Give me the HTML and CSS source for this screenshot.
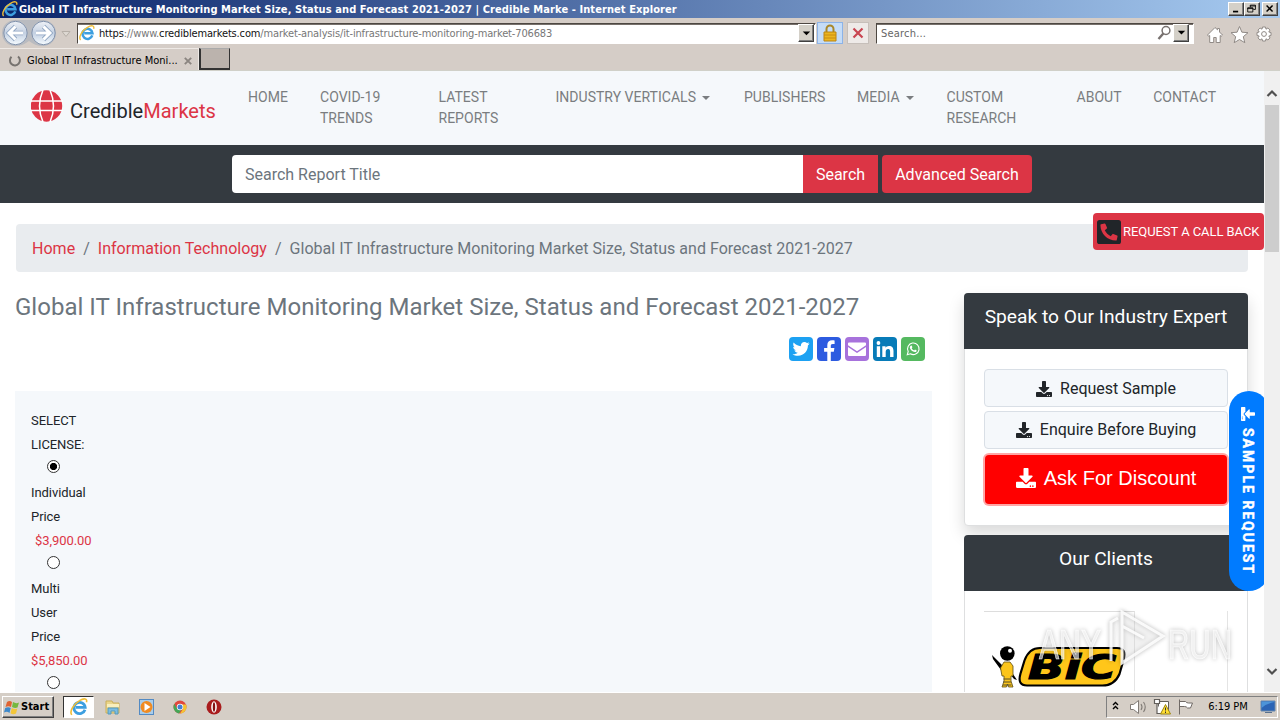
FILE: index.html
```html
<!DOCTYPE html>
<html lang="en">
<head>
<meta charset="utf-8">
<title>Global IT Infrastructure Monitoring Market Size, Status and Forecast 2021-2027</title>
<link rel="stylesheet" href="styles.css">
</head>
<body>
<svg class="defs" width="0" height="0">
  <defs>
    <symbol id="download" viewBox="0 0 512 512"><path d="M216 0h80c13.3 0 24 10.7 24 24v168h87.7c17.8 0 26.7 21.5 14.1 34.1L269.7 378.3c-7.5 7.5-19.8 7.5-27.3 0L90.1 226.1c-12.6-12.6-3.7-34.1 14.1-34.1H192V24c0-13.3 10.7-24 24-24zm296 376v112c0 13.3-10.7 24-24 24H24c-13.3 0-24-10.7-24-24V376c0-13.3 10.7-24 24-24h146.7l49 49c20.1 20.1 52.5 20.1 72.6 0l49-49H488c13.3 0 24 10.7 24 24zm-124 88c0-11-9-20-20-20s-20 9-20 20 9 20 20 20 20-9 20-20zm64 0c0-11-9-20-20-20s-20 9-20 20 9 20 20 20 20-9 20-20z"/></symbol>
    <symbol id="ie" viewBox="0 0 16 16">
      <path d="M13.3 10.400A5 5 0 1 1 13.500 8.300H5.200" fill="none" stroke="#3d9fe0" stroke-width="2.500"/>
      <path d="M1.600 15C-.8 12 3 5.500 8.500 2.300 12.500-.2 15.700.5 14.600 3.800" fill="none" stroke="#f0bd36" stroke-width="1.400"/>
    </symbol>
  </defs>
</svg>
<div class="window">
  <header class="titlebar">
    <svg class="ie-icon" width="16" height="16"><use href="#ie"/></svg>
    <span class="title-text">Global IT Infrastructure Monitoring Market Size, Status and Forecast 2021-2027 | Credible Marke - Internet Explorer</span>
    <div class="win-buttons">
      <svg class="bevel" width="16" height="14" viewBox="0 0 15 14"><path d="M4 9h6v2H4z"/></svg>
      <svg class="bevel" width="16" height="14" viewBox="0 0 15 14"><path d="M5.500 5V2.500h6v5H9M5 3.500h7M2.500 5.500h6v5h-6zM2 6.500h7" fill="none" stroke="#000"/></svg>
      <svg class="bevel close" width="16" height="14" viewBox="0 0 15 14"><path d="M3.500 3l7 7m0-7l-7 7" stroke="#000" stroke-width="1.700"/></svg>
    </div>
  </header>

  <div class="navrow">
    <svg class="navarrows" width="74" height="30" viewBox="0 0 74 30">
      <defs><linearGradient id="orb" x2="0" y2="1"><stop offset="0" stop-color="#eef1f6"/><stop offset=".5" stop-color="#c3d0e2"/><stop offset="1" stop-color="#f5fbff"/></linearGradient></defs>
      <path d="M15 2h28a13 13 0 0 1 0 26c-6 0-10-2-14-5-4 3-8 5-14 5a13 13 0 0 1 0-26z" fill="#b9bbc0"/>
      <g fill="url(#orb)" stroke="#8293ad"><circle cx="15.500" cy="15" r="11.700"/><circle cx="43.500" cy="15" r="11.700"/></g>
      <g fill="none" stroke="#8fa5c2" stroke-width="4.600"><path d="M23 15H10M15.500 8.500L9 15l6.500 6.500M36 15h13M43.500 8.500L50 15l-6.500 6.500"/></g>
      <g fill="none" stroke="#fff" stroke-width="3"><path d="M23 15H10M15.500 8.500L9 15l6.500 6.500M36 15h13M43.500 8.500L50 15l-6.500 6.500"/></g>
      <path d="M62 13.500h8l-4 5z" fill="#ddd8d2" stroke="#b6afa8"/>
    </svg>
    <div class="field address">
      <svg width="16" height="16"><use href="#ie"/></svg>
      <span class="url"><b>https</b>://www.<b>crediblemarkets.com</b>/market-analysis/it-infrastructure-monitoring-market-706683</span>
      <svg class="bevel drop" width="16" height="18" viewBox="0 0 15 17"><path d="M4 7h8l-4 4z"/></svg>
    </div>
    <div class="lock"><svg width="16" height="18" viewBox="0 0 16 18"><path d="M4.500 8V5a3.500 3.500 0 0 1 7 0v3" fill="none" stroke="#a98729" stroke-width="2"/><path d="M2 8h12v9H2z" fill="#ebb51f" stroke="#bb8413"/><path d="M2 11h12M2 14h12" stroke="#c98c12"/></svg></div>
    <div class="stop"><svg width="12" height="12" viewBox="0 0 12 12"><path d="M1.500 1.500l9 9m0-9l-9 9" stroke="#c84551" stroke-width="2.200"/></svg></div>
    <div class="field search">
      <span class="search-text">Search...</span>
      <svg width="15" height="16" viewBox="0 0 15 16"><circle cx="9" cy="5.500" r="3.900" fill="none" stroke="#77716f" stroke-width="1.500"/><path d="M6.300 8.500L1.500 14" stroke="#77716f" stroke-width="2.400"/></svg>
      <svg class="bevel drop2" width="16" height="18" viewBox="0 0 15 17"><path d="M4 6h8l-4 4z"/></svg>
    </div>
    <svg class="tools" width="70" height="20" viewBox="0 0 70 20" fill="#fff" stroke="#908a86" stroke-width="1">
      <path d="M1.500 10L9 2.500l2.500 2.300V3.500h2v3.500l3 3-1.300 1.300-1-.8v7h-4v-5H7.700v5h-4v-7l-1 .8z"/>
      <path d="M33.500 1.500l2.400 5.700 6.100.5-4.700 4 1.500 6-5.300-3.200-5.300 3.200 1.500-6-4.700-4 6.100-.5z"/>
      <path d="M56.500 2h3l.5 2.200 1.900-1.200 2.100 2.100-1.200 1.900 2.200.5v3l-2.200.5 1.200 1.900-2.100 2.100-1.900-1.200-.5 2.200h-3l-.5-2.200-1.900 1.200L52 12.900l1.200-1.900-2.200-.5v-3l2.200-.5L52 5.100 54.100 3 56 4.200z"/><circle cx="58" cy="9" r="2.400"/>
    </svg>
  </div>

  <div class="tabrow">
    <div class="tab">
      <svg width="14" height="14" viewBox="0 0 14 14"><path d="M3.500 2.800A5 5 0 1 0 10 2.500" fill="none" stroke="#77736f" stroke-width="2"/></svg>
      <span class="tab-text">Global IT Infrastructure Moni...</span>
      <svg class="tab-x" width="8" height="8" viewBox="0 0 8 8"><path d="M.8.800l6.400 6.400m0-6.400L.800 7.200" stroke="#8b8580" stroke-width="1.900"/></svg>
    </div>
    <div class="newtab"></div>
  </div>

  <div class="viewport">
    <main class="page">
      <nav class="site-nav">
        <div class="brand">
          <svg width="32" height="32" viewBox="0 0 32 32"><circle cx="15.500" cy="16" r="15.700" fill="#dc3545"/><path d="M0 11h32M0 20.500h32M12 0q-7 16 0 32M19 0q7 16 0 32" fill="none" stroke="#fff" stroke-width="1.500"/></svg>
          <span class="brand-text">Credible<em>Markets</em></span>
        </div>
        <ul class="menu">
          <li class="m1">HOME</li><li class="m2">COVID-19<br>TRENDS</li><li class="m3">LATEST<br>REPORTS</li><li class="m4">INDUSTRY VERTICALS<i class="caret"></i></li><li class="m5">PUBLISHERS</li><li class="m6">MEDIA<i class="caret"></i></li><li class="m7">CUSTOM<br>RESEARCH</li><li class="m8">ABOUT</li><li class="m9">CONTACT</li>
        </ul>
      </nav>
      <div class="searchbar">
        <div class="report-input">Search Report Title</div>
        <div class="btn-red go">Search</div>
        <div class="btn-red adv">Advanced Search</div>
      </div>
      <div class="content">
        <div class="breadcrumb"><a>Home</a><span class="sep">/</span><a>Information Technology</a><span class="sep">/</span><span>Global IT Infrastructure Monitoring Market Size, Status and Forecast 2021-2027</span></div>
        <div class="columns">
          <section class="left">
            <h1>Global IT Infrastructure Monitoring Market Size, Status and Forecast 2021-2027</h1>
            <div class="share">
              <svg class="tw" viewBox="0 0 24 24"><path transform="translate(3.500 3.300) scale(.0335)" fill="#fff" d="M459.370 151.716c.325 4.548.325 9.097.325 13.645 0 138.720-105.583 298.558-298.558 298.558-59.452 0-114.680-17.219-161.137-47.106 8.447.974 16.568 1.299 25.340 1.299 49.055 0 94.213-16.568 130.274-44.832-46.132-.975-84.792-31.188-98.112-72.772 6.498.974 12.995 1.624 19.818 1.624 9.421 0 18.843-1.300 27.614-3.573-48.081-9.747-84.143-51.980-84.143-102.985v-1.299c13.969 7.797 30.214 12.670 47.431 13.319-28.264-18.843-46.781-51.005-46.781-87.391 0-19.492 5.197-37.360 14.294-52.954 51.655 63.675 129.300 105.258 216.365 109.807-1.624-7.797-2.599-15.918-2.599-24.040 0-57.828 46.782-104.934 104.934-104.934 30.213 0 57.502 12.670 76.670 33.137 23.715-4.548 46.456-13.320 66.599-25.340-7.798 24.366-24.366 44.833-46.132 57.827 21.117-2.273 41.584-8.122 60.426-16.243-14.292 20.791-32.161 39.308-52.628 54.253z"/></svg>
              <svg class="fb" viewBox="0 0 24 24"><path fill="#fff" d="M10.300 24v-9.300H7.100v-3.600h3.200V8.300c0-3.300 1.900-5 4.900-5 1.400 0 2 .1 2.400.2v3.400h-1.900c-1.500 0-1.900.8-1.900 1.900v2.300h3.600l-.6 3.600h-3V24z"/></svg>
              <svg class="ml" viewBox="0 0 24 24"><path fill="#fff" d="M4 5.500h16q1 0 1 1v1.700l-9 6-9-6V6.500q0-1 1-1zM3 10l9 6 9-6v8q0 1-1 1H4q-1 0-1-1z"/></svg>
              <svg class="li" viewBox="0 0 24 24"><path fill="#fff" d="M3.800 9.200h3.300V20H3.800zM9.300 9.200h3.200v1.500c.6-1 1.700-1.800 3.400-1.800 3.300 0 4.600 1.900 4.600 5.200V20h-3.400v-5.300c0-1.600-.4-2.800-1.900-2.800-1.700 0-2.500 1.200-2.500 2.900V20H9.300z"/><circle cx="5.450" cy="6" r="1.900" fill="#fff"/></svg>
              <svg class="wa" viewBox="0 0 24 24"><path d="M6.300 17.700l.9-3.200a5.800 5.800 0 1 1 2.200 2.300z" fill="none" stroke="#fff" stroke-width="1.100"/><path d="M9.900 8.700l.8-.1.700 1.700-.7 1c.7 1.200 1.400 1.700 2.500 2.300l.8-1 1.700.8c0 1.200-.8 1.700-1.800 1.700-2.500-.3-4.900-2.500-5.100-4.500 0-.9.500-1.500 1.100-1.900z" fill="#fff"/></svg>
            </div>
            <div class="license">
              <p>SELECT<br>LICENSE:</p>
              <i class="radio on"></i>
              <p>Individual<br>Price</p>
              <p class="price first">$3,900.00</p>
              <i class="radio"></i>
              <p>Multi<br>User<br>Price</p>
              <p class="price">$5,850.00</p>
              <i class="radio"></i>
            </div>
          </section>
          <aside class="right">
            <div class="card expert">
              <h2>Speak to Our Industry Expert</h2>
              <div class="card-body">
                <div class="light"><svg width="16" height="16"><use href="#download"/></svg>Request Sample</div>
                <div class="light"><svg width="16" height="16"><use href="#download"/></svg>Enquire Before Buying</div>
                <div class="discount"><svg width="20" height="20"><use href="#download"/></svg>Ask For Discount</div>
              </div>
            </div>
            <div class="card clients">
              <h2>Our Clients</h2>
              <div class="client-body"><div class="cell">
                <svg width="134" height="44" viewBox="0 0 134 44">
                  <path d="M0 9l10 10-1 5L1 13zM19 25l6 9-3-1-5-6z"/>
                  <circle cx="15.300" cy="7.500" r="7.300"/><circle cx="18" cy="4.800" r="2" fill="#fff"/>
                  <path d="M12 16h6l3 4v10h-2v5l2 6h-4.500l-1-3-1 3H10l2-6v-5H10l-1.500-8z" fill="#fcc51b" stroke="#5a4b14" stroke-width=".8"/>
                  <path d="M11.500 33h7M11 36h8M11 39h8.500" stroke="#57502e"/>
                  <path d="M48 2h77q10 0 6.500 12l-4 14q-5 11.500-17 11.500H35q-10 0-6.500-12l4-13Q37 2 48 2z" fill="#ffc61a" stroke="#000" stroke-width="2.200"/>
                  <text x="36" y="32.500" class="bic" textLength="88" lengthAdjust="spacingAndGlyphs">BiC</text>
                </svg>
              </div><div class="cell two"></div></div>
            </div>
          </aside>
        </div>
      </div>
      <div class="callback"><svg width="24" height="24" viewBox="0 32 448 448"><rect y="32" width="448" height="448" rx="48" fill="#212529"/><path transform="matrix(-1 0 0 1 448 0)" fill="#dc3545" d="M94 416c-7 0-13-4.900-14.600-11.600l-15-65a15 15 0 0 1 8.700-17.200l70-30a15 15 0 0 1 17.500 4.300l31 37.900c49-23 88.300-62.900 110.800-110.800l-37.900-31a15 15 0 0 1-4.300-17.500l30-70a15 15 0 0 1 17.200-8.700l65 15A15 15 0 0 1 384 126c0 160.300-130 290-290 290z"/></svg><span>REQUEST A CALL BACK</span></div>
      <div class="sample"><svg width="14" height="14" viewBox="0 0 14 14"><use href="#download" transform="rotate(90 7 7)" width="14" height="14"/></svg><span>SAMPLE REQUEST</span></div>
    </main>
    <div class="scrollbar">
      <svg width="16" height="34" viewBox="0 0 16 34"><path d="M3.500 25L8 20.500l4.500 4.500" fill="none" stroke="#505050" stroke-width="2.200"/></svg>
      <div class="thumb"></div>
      <svg class="down" width="16" height="34" viewBox="0 0 16 34"><path d="M3.500 11L8 15.500 12.500 11" fill="none" stroke="#505050" stroke-width="2.200"/></svg>
    </div>
    <svg class="watermark" width="200" height="70" viewBox="0 0 200 70">
      <g fill="#fff" fill-opacity=".6" stroke="#fff" stroke-opacity=".85" stroke-width=".7">
        <text x="1" y="52" textLength="62" lengthAdjust="spacingAndGlyphs">ANY</text>
        <text x="130" y="52" textLength="64" lengthAdjust="spacingAndGlyphs">RUN</text>
      </g>
      <path d="M73 54V15l7-4M84 5l41 24-41 27zM84 19l22 12" fill="#fff" fill-opacity=".2" stroke="#fff" stroke-width="3" stroke-opacity=".85"/>
    </svg>
  </div>

  <footer class="taskbar">
    <div class="start"><svg width="16" height="16" viewBox="0 0 16 16"><path d="M3 3q2.500-1.800 5 0L7 8Q4.500 6.500 1.500 8z" fill="#df6332"/><path d="M9 3q3 2 6 .5L13.500 8.500Q11 9.500 8 8z" fill="#75b83f"/><path d="M1.200 9q3-1.500 5.500 0L5.500 14Q3 12 0 13.500z" fill="#3d89cb"/><path d="M7.800 9q3 1.800 5.500.500L12 14.500q-3 1.500-5.500-.2z" fill="#f3c638"/></svg><b>Start</b></div>
    <div class="task active"><svg width="18" height="18"><use href="#ie"/></svg></div>
    <div class="task"><svg width="18" height="18" viewBox="0 0 18 18"><path d="M2 3h6l1 2h6v10H2z" fill="#ead58b" stroke="#c9af5a"/><path d="M3 6h12v3H3z" fill="#f9efbd"/><path d="M4 16v-6h10v6h-3v-3H7v3z" fill="#7bbce2" stroke="#549abc"/></svg></div>
    <div class="task"><svg width="18" height="18" viewBox="0 0 18 18"><rect x="1.500" y="1.500" width="14" height="15" fill="#a9cdea" stroke="#538ac3"/><circle cx="8.500" cy="9" r="6" fill="#f08b21"/><path d="M6.500 5l6 4-6 4z" fill="#fff"/></svg></div>
    <div class="task"><svg width="16" height="16" viewBox="0 0 16 16"><circle cx="8" cy="8" r="6.500" fill="#e0483e"/><path d="M2.300 4.800A6.500 6.500 0 0 0 7 14.400l3-5H5z" fill="#45a657"/><path d="M8 14.500a6.500 6.500 0 0 0 6-9.100H9l2 4.500z" fill="#f4c432"/><circle cx="8" cy="8" r="3.200" fill="#fff"/><circle cx="8" cy="8" r="2.500" fill="#437fd2"/></svg></div>
    <div class="task"><svg width="16" height="16" viewBox="0 0 16 16"><circle cx="8" cy="8" r="7.500" fill="#a91c1d"/><ellipse cx="8" cy="8" rx="2.800" ry="5.800" fill="#fff"/><ellipse cx="8" cy="8" rx="1.200" ry="4.800" fill="#851112"/></svg></div>
    <div class="tray">
      <svg width="88" height="20" viewBox="0 0 88 20"><g fill="none" stroke="#000" stroke-width="1.400"><path d="M5 8l2.500-2.500L10 8M5 12l2.500-2.500L10 12"/></g>
        <path d="M22.500 7.500h3l5-4v13l-5-4h-3z" fill="#fff" stroke="#817b76"/><path d="M33 7q2 3 0 6M35.500 5q3.500 5 0 10" fill="none" stroke="#817b76" stroke-width="1.100"/>
        <path d="M50.500 4.500h10v11h-10z" fill="#fff" stroke="#625e5a"/><path d="M46.500 2.500h5v4h-5zM49 6.500v10h5" fill="#fff" stroke="#625e5a" stroke-width="1.200"/><path d="M57.500 7.500L62.500 17h-10z" fill="#ffde34" stroke="#9c8612"/><path d="M57.500 10.500v3m0 1v1.500" stroke="#333"/>
        <path d="M71.500 17.500v-15M71.500 4.500h6q1 1.500 3 1.500h4l-2 5h-3q-1-1.500-3-1.500h-5" fill="#fff" stroke="#706a66"/></svg>
      <span class="clock">6:19 PM</span>
      <svg width="16" height="14" viewBox="0 0 16 14"><path d="M1 1h14v10H1z" fill="#2b64b5" stroke="#6986a9"/><path d="M1.500 8q6-5 13-6v-.5h-13z" fill="#4c94d9"/><path d="M5 12.500h7" stroke="#59718f"/></svg>
    </div>
  </footer>
</div>
</body>
</html>
```
FILE: styles.css
```css
* { box-sizing: border-box; }
body { margin: 0; overflow: hidden; }
svg { flex: none; display: block; }
.defs { position: absolute; }
.window { width: 1280px; height: 720px; display: flex; flex-direction: column; overflow: hidden; background: #d4d0c8; font: 11px/14px "DejaVu Sans Condensed", "DejaVu Sans", sans-serif; }

/* browser frame */
.titlebar { height: 18px; flex: none; display: flex; align-items: center; padding: 0 2px 0 2px; background: linear-gradient(90deg, #0a246a, #a6caf0); color: #fff; }
.title-text { flex: 1; font-weight: bold; white-space: nowrap; padding: 1px 0 0 1px; letter-spacing: .085px; }
.win-buttons { display: flex; }
.close { margin-left: 2px; }
.bevel { background: #d4d0c8; border: 1px solid; border-color: #fff #404040 #404040 #fff; box-shadow: inset -1px -1px #808080; }
.navrow { height: 30px; flex: none; display: flex; align-items: center; background: #d5cdc7; }
.navarrows { margin-right: 1px; }
.field { height: 21px; display: flex; align-items: center; background: #fff; border: 1px solid; border-color: #4d4742 #fff #fff #4d4742; box-shadow: inset 0 1px #77706b; }
.address { width: 739px; padding: 0 1px 0 1px; margin-left: 2px; }
.url { flex: 1; padding: 2px 0 0 4px; color: #777; white-space: nowrap; letter-spacing: -.15px; }
.url b { font-weight: normal; color: #111; }
.lock { width: 26px; height: 22px; margin-left: 1px; display: grid; place-items: center; background: #c5dcf7; border: 1px solid #8cb3e8; }
.stop { width: 22px; height: 22px; margin: 0 7px 0 4px; display: grid; place-items: center; background: #eeeae8; border: 1px solid #c6bfba; }
.search { width: 318px; padding: 0 4px 0 4px; }
.search-text { flex: 1; padding-top: 2px; color: #666; letter-spacing: .2px; }
.drop2 { margin-left: 1px; }
.tools { margin: 4px 0 0 12px; }
.tabrow { height: 23px; flex: none; display: flex; background: #d5cdc7; border-bottom: 1px solid #d0d0c8; }
.tab { width: 199px; display: flex; align-items: center; padding: 2px 0 0 8px; border-top: 1px solid #eee9e5; border-right: 1px solid #eee9e5; }
.tab-text { width: 150px; margin: 0 7px 0 5px; white-space: nowrap; }
.newtab { width: 31px; height: 22px; background: #bbb3ad; border: 1px solid #333; border-width: 1px 1px 2px 2px; border-top-color: #aaa; }

.viewport { height: 621px; flex: none; display: flex; position: relative; overflow: hidden; background: #fff; }
.page { width: 1264px; height: 621px; position: relative; overflow: hidden; font: 16px/24px Roboto, sans-serif; color: #212529; }
.scrollbar { width: 16px; background: #f0f0f0; display: flex; flex-direction: column; }
.thumb { width: 14px; height: 147px; margin-left: 1px; background: #cdcdcd; }
.down { margin-top: auto; }

/* site header */
.site-nav { height: 74px; display: flex; background: #f5f8fb; }
.brand { width: 248px; display: flex; align-items: flex-start; padding: 19px 0 0 31px; }
.brand-text { margin: 9px 0 0 7px; font-size: 20px; white-space: nowrap; letter-spacing: .02px; }
.brand em { font-style: normal; color: #dc3545; }
.menu { list-style: none; margin: 0; padding: 16px 0 0; display: flex; font-size: 14px; line-height: 21px; color: #7a7d80; white-space: nowrap; letter-spacing: .02px; }
.m1 { width: 72px; } .m2 { width: 118.500px; } .m3 { width: 117px; } .m4 { width: 188.500px; }
.m5 { width: 113px; } .m6 { width: 89.500px; } .m7 { width: 130px; } .m8 { width: 76.700px; }
.caret { display: inline-block; margin-left: 6.500px; vertical-align: 2.500px; border: 4.800px solid transparent; border-top-color: currentColor; border-bottom: 0; }
.searchbar { height: 58px; display: flex; align-items: center; padding: 0 0 0 232px; background: #343a40; }
.report-input { width: 571px; height: 38px; padding: 8px 13px 6px; border-radius: 4px 0 0 4px; background: #fff; color: #6c757d; }
.btn-red { height: 38px; padding-top: 8px; text-align: center; background: #dc3545; color: #fff; }
.go { width: 75px; margin-right: 4px; }
.adv { width: 150px; border-radius: 4px; }

.content { padding: 21px 16px 0 15px; }
.breadcrumb { height: 48px; margin-left: 1px; padding: 13px 16px 11px; display: flex; background: #e9ecef; border-radius: 4px; color: #6c757d; white-space: nowrap; letter-spacing: .02px; }
.breadcrumb a { color: #dc3545; }
.sep { margin: 0 8px; }
.columns { display: flex; justify-content: space-between; padding-top: 21px; }
.left { width: 917px; }
h1 { margin: 0; font: 400 24px/29px Roboto, sans-serif; letter-spacing: .025px; color: #6c757d; white-space: nowrap; }
.share { display: flex; justify-content: flex-end; gap: 4px; padding: 15px 7px 0 0; }
.share svg { width: 24px; height: 24px; border-radius: 4px; }
.tw { background: #1da1f2; } .fb { background: #2d5be0; } .ml { background: #a772dc; } .li { background: #077bb8; } .wa { background: #55b960; }
.license { height: 330px; margin-top: 30px; padding: 18px 16px; background: #f5f8fb; font-size: 13px; line-height: 24px; letter-spacing: -.07px; }
.license p { margin: 0; }
.price { color: #dc3545; }
.license .first { padding-left: 4px; }
.radio { display: block; width: 13px; height: 13px; margin: 3px 0 8px 16px; border: 1px solid #333; border-radius: 50%; background: #fff; }
.on { background: radial-gradient(circle, #000 3.300px, #fff 3.900px); }

/* sidebar */
.right { width: 285px; padding-left: 1px; }
.card { border: 1px solid #dedfe0; border-radius: 4px; background: #fff; }
.card h2 { height: 56px; margin: -1px -1px 0; padding-top: 12px; border-radius: 4px 4px 0 0; text-align: center; background: #343a40; color: #fff; font: 400 19.200px/24px Roboto, sans-serif; }
.expert { height: 233px; margin-bottom: 9px; box-shadow: 0 8px 16px rgba(0,0,0,.15); }
.card-body { padding: 20px 19px; display: flex; flex-direction: column; gap: 4px; }
.light, .discount { display: flex; align-items: center; justify-content: center; gap: 8px; border-radius: 4px; fill: currentColor; }
.light { height: 38px; padding-top: 1px; background: #f5f8fb; border: 1px solid #d9dfe6; }
.light + .light { padding: 0 0 1px; }
.discount { height: 49px; margin: 2px 1px 0; padding-bottom: 3px; background: #f00; color: #fff; font-family: "Liberation Sans", sans-serif; font-size: 20px; letter-spacing: .03px; box-shadow: 0 0 0 2px #ffa5a5; }
.clients { height: 180px; }
.client-body { display: flex; height: 100px; padding: 20px 19px 0; }
.cell { width: 151px; border-top: 1px solid #ddd; border-right: 1px solid #e4e4e4; padding: 34px 0 0 8px; }
.two { width: 93px; flex: none; border-top: 0; }
.bic { font: italic 900 33px "DejaVu Sans", sans-serif; stroke: #000; stroke-width: 1.200px; }

.callback { position: absolute; right: 0; top: 142px; width: 171px; height: 37px; display: flex; align-items: center; gap: 2px; padding-left: 4px; border-radius: 4px; background: #dc3545; color: #fff; font-size: 13px; letter-spacing: -.06px; white-space: nowrap; }
.sample { position: absolute; left: 1229px; top: 320px; width: 40px; height: 200px; padding: 16px 0 0 12px; border-radius: 20px; background: #007bff; color: #fff; fill: #fff; }
.sample span { display: block; margin-top: 7px; writing-mode: vertical-rl; font: bold 14px/14px Roboto, sans-serif; letter-spacing: 2px; -webkit-text-stroke: .4px #fff; white-space: nowrap; }
.watermark { position: absolute; left: 1038px; top: 536px; filter: drop-shadow(0 0 2px rgba(0,0,0,.35)); }
.watermark text { font: 42px "Liberation Sans", sans-serif; }

/* taskbar */
.taskbar { height: 28px; flex: none; display: flex; align-items: center; padding: 0 2px 0; background: #d5cec6; border-top: 1px solid #fff; box-shadow: inset 0 1px #d5cec6; }
.start { width: 52px; height: 22px; display: flex; align-items: center; gap: 1px; padding-left: 1px; border: 1px solid; border-color: #fff #404040 #404040 #fff; box-shadow: inset -1px -1px #808080; }
.start b { font-size: 11px; padding-top: 1px; }
.task { width: 33.700px; height: 22px; display: grid; place-items: center; }
.active { width: 31px; margin: 0 2px 0 9px; background: #fff; border: 1px solid; border-color: #333 #fff #fff #333; }
.tray { width: 172px; height: 22px; margin-left: auto; display: flex; align-items: center; justify-content: space-between; padding: 0 1px 0 1px; border: 1px solid; border-color: #808080 #fff #fff #808080; }
.clock { white-space: nowrap; padding-top: 1px; letter-spacing: -.05px; }
```
